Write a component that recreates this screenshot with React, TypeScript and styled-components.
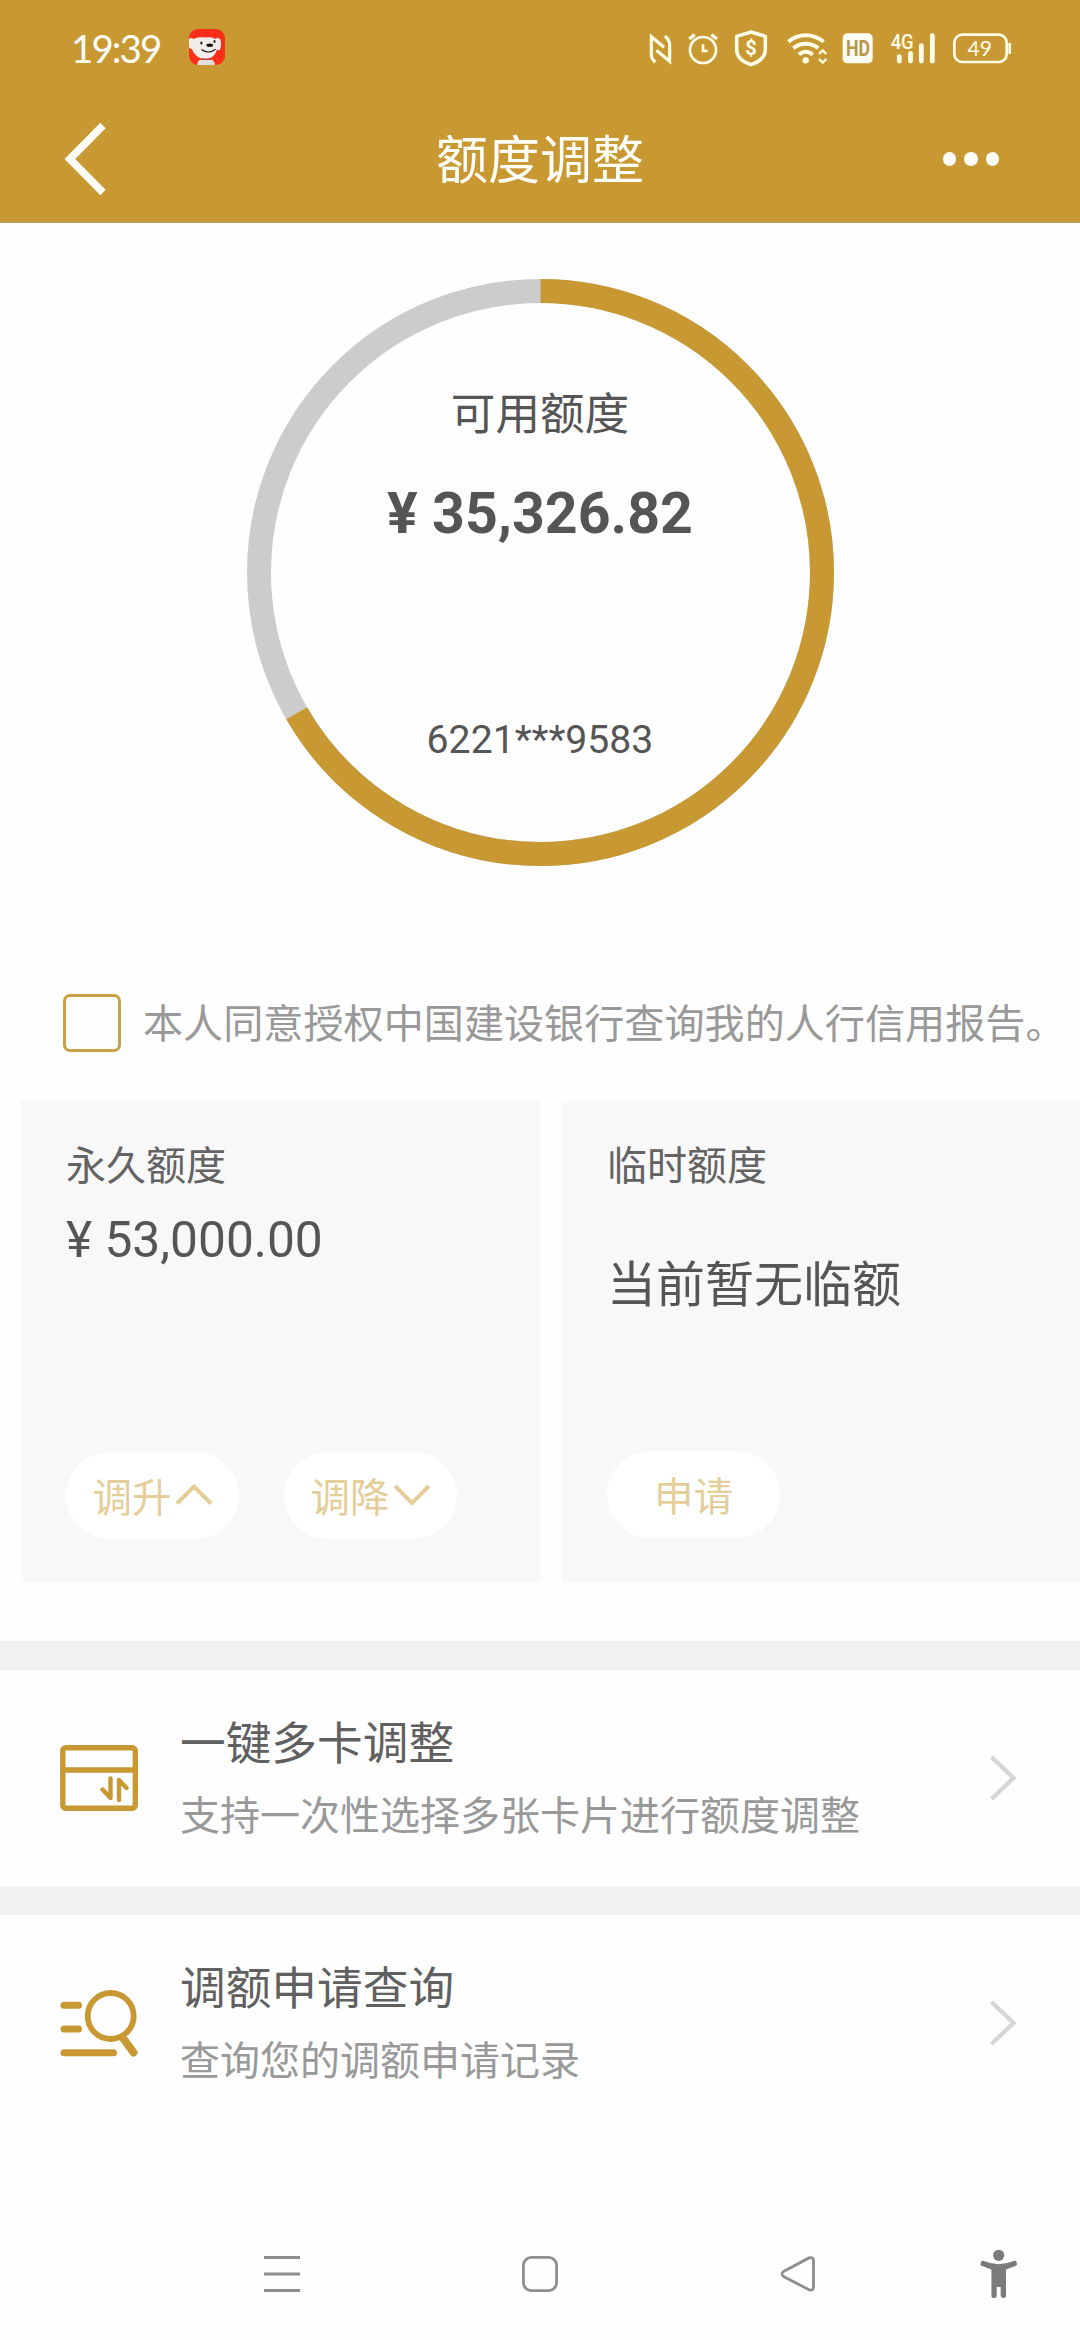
import React from "react";
import styled, { createGlobalStyle } from "styled-components";

const gold = "#c89932";
const sans = `Roboto, "Noto Sans CJK SC", sans-serif`;

const GlobalStyle = createGlobalStyle`
  * { box-sizing: border-box; }
  body { margin: 0; background: #fefefe; font-family: ${sans}; color: #555; }
  svg { display: block; flex: none; }
`;

const Screen = styled.div`
  width: 1080px;
  height: 2340px;
  display: flex;
  flex-direction: column;
  overflow: hidden;
  background: #fefefe;
`;

const Header = styled.header`
  height: 223px;
  background: ${gold};
  border-bottom: 2px solid #bf9a4c;
  color: #fffef8;
`;

const StatusBar = styled.div`
  height: 93px;
  display: flex;
  align-items: center;
  padding: 0 68px 0 71px;
`;

const Clock = styled.div`
  width: 118px;
  font: 400 38.5px/50px Lato, sans-serif;
  letter-spacing: -1.9px;
  padding-top: 3px;
`;

const StatusIcons = styled.div`
  margin-left: auto;
  display: flex;
`;

const StatusGlyph = styled.svg<{ $before: number }>`
  height: 40px;
  margin-left: ${(p) => p.$before}px;
  overflow: visible;
  fill: none;
  stroke: #fffde8;
`;

const TitleBar = styled.div`
  height: 128px;
  padding: 4px 81px 0 64px;
  display: grid;
  grid-template-columns: 1fr auto 1fr;
  align-items: center;
`;

const PageTitle = styled.h1`
  margin: 0;
  padding: 6px 0 0 17px;
  font-size: 52px;
  line-height: 64px;
  font-weight: 400;
`;

const BackIcon = styled.svg`
  width: 44px;
  height: 76px;
`;

const Dots = styled.div`
  justify-self: end;
  display: flex;
  gap: 8px;
`;

const Dot = styled.i`
  width: 13.5px;
  height: 13.5px;
  border-radius: 50%;
  background: #fffef8;
`;

const Gauge = styled.section`
  height: 771px;
  padding-top: 56px;
  display: grid;
  justify-content: center;
  align-content: start;
`;

const Ring = styled.svg`
  grid-area: 1 / 1;
  width: 587px;
  height: 587px;
`;

const GaugeText = styled.div`
  grid-area: 1 / 1;
  padding-top: 106px;
  display: flex;
  flex-direction: column;
  align-items: center;
`;

const GaugeLabel = styled.div`
  font-size: 44.6px;
  line-height: 60px;
`;

const GaugeAmount = styled.div`
  margin-top: 39px;
  font-size: 57.3px;
  line-height: 60px;
  font-weight: 700;
`;

const CardNumber = styled.div`
  margin-top: 171px;
  font-size: 39.2px;
  line-height: 50px;
`;

const Consent = styled.label`
  height: 58px;
  display: flex;
  align-items: center;
  padding-left: 62.5px;
  gap: 22.5px;
`;

const Checkbox = styled.span`
  width: 58px;
  height: 58px;
  flex: none;
  border: 3.5px solid #c9a045;
  border-radius: 7px;
`;

const ConsentText = styled.span`
  padding-top: 4px;
  font-size: 40.12px;
  line-height: 54px;
  color: #999;
  white-space: nowrap;
`;

const Limits = styled.section`
  margin-top: 49px;
  padding-left: 21px;
  display: grid;
  grid-template-columns: 519px 518px;
  gap: 22px;
  height: 481px;
`;

const LimitCard = styled.article`
  background: #f8f8f8;
  padding: 41px 45px 43.5px;
  display: flex;
  flex-direction: column;
`;

const LimitLabel = styled.div`
  font-size: 40px;
  line-height: 50px;
  color: #636363;
`;

const LimitValue = styled.div<{ $gap: number; $size: number }>`
  margin-top: ${(p) => p.$gap}px;
  font-size: ${(p) => p.$size}px;
  line-height: 60px;
  color: #555;
`;

const Actions = styled.div`
  margin-top: auto;
  display: flex;
  gap: 45px;
`;

const Pill = styled.button<{ $raised?: boolean }>`
  width: 173px;
  height: 86.5px;
  border: 0;
  padding: 8px 0 0;
  margin-bottom: ${(p) => (p.$raised ? 1 : 0)}px;
  border-radius: 44px;
  background: #fff;
  display: flex;
  align-items: center;
  justify-content: center;
  gap: 3px;
  font: 400 39.5px/50px ${sans};
  color: #e5cd98;
`;

const Chevron = styled.svg`
  width: 38px;
  height: 24px;
  margin-top: -8px;
`;

const Band = styled.div<{ $top?: number }>`
  height: 29px;
  margin-top: ${(p) => p.$top ?? 0}px;
  flex: none;
  background: #f1f1f1;
`;

const Row = styled.div`
  height: 216px;
  flex: none;
  display: flex;
  align-items: center;
  padding: 0 63px 0 60px;
`;

const RowText = styled.div`
  margin-left: 42px;
  flex: 1;
  padding-top: 6px;
  line-height: 72px;
`;

const RowTitle = styled.div`
  font-size: 45.7px;
  color: #606060;
`;

const RowHint = styled.div`
  font-size: 40px;
  color: #999;
`;

const NavBar = styled.nav`
  margin-top: auto;
  height: 132px;
  padding-left: 264px;
  display: flex;
  align-items: center;
`;

const NavIcon = styled.svg<{ $before?: number }>`
  margin-left: ${(p) => p.$before ?? 0}px;
  fill: none;
  stroke: #8e8e8e;
  stroke-width: 2.8;
`;

const AppBadge = () => (
  <svg width="36" height="36" viewBox="0 0 36 36">
    <defs>
      <clipPath id="badge"><rect width="36" height="36" rx="9" /></clipPath>
    </defs>
    <g clipPath="url(#badge)">
      <rect width="36" height="36" fill="#fb2f17" />
      <path d="M8 37c0-4 2-7 6-7h6c4 0 6 3 6 7z" fill="#e6dedb" />
      <path d="M0 10c1.500-1.500 3.500-1 4.500 0C8 8 13 8 17 8.500c4-.5 7 0 9.500 1.500 1-1.500 3.500-1.500 4.500 0 1.500 3 1.500 9-.5 11-1 .5-2 0-2.500-.5C26.500 26 22.500 30 17 30 10 30 5 26 3 20c-2 0-3-1-3-3z" fill="#f1ecea" />
      <path d="M12 30.300h10" stroke="#c63c35" strokeWidth="1.400" />
      <ellipse cx="20.700" cy="16.200" rx="3.400" ry="1.700" fill="#161212" />
      <ellipse cx="12.400" cy="14" rx="1.100" ry="1.500" fill="#161212" />
      <ellipse cx="25.500" cy="12.500" rx="1" ry="1.400" fill="#161212" />
      <path d="M12.500 20.500q7 5 14-.2" fill="none" stroke="#161212" strokeWidth="1.100" />
    </g>
  </svg>
);

const StatusRow = () => (
  <StatusIcons>
    <StatusGlyph $before={0} width="23" viewBox="57 50 69 120" strokeWidth="9.500">
      <path d="M76 156Q64 146 64 132V79L102 111M105 77Q119 90 119 103V153L79 120" />
    </StatusGlyph>
    <StatusGlyph $before={15} width="32" viewBox="171 50 96 120" strokeWidth="8">
      <circle cx="219" cy="119" r="39" />
      <path d="M178 86L194 73M244 73L261 86" strokeWidth="10" />
      <path d="M219 102V122H233" />
    </StatusGlyph>
    <StatusGlyph $before={15} width="34" viewBox="312 50 102 120" strokeWidth="10.500">
      <path d="M363 65L406 78V117C406 142 388 155 363 163C338 155 320 142 320 117V78Z" strokeLinejoin="round" />
      <text x="363" y="134" textAnchor="middle" fontFamily="Roboto" fontSize="60" fontWeight="700" fill="#fffde8" stroke="none">$</text>
    </StatusGlyph>
    <StatusGlyph $before={18} width="42" viewBox="468 50 126 120" strokeWidth="12">
      <path d="M475 94Q499 75 527 75T581 94M490 114Q506 100 527 100T565 113M507 133Q516 124 527 124T548 133" />
      <circle cx="527" cy="150" r="9.500" fill="#fffde8" stroke="none" />
      <path d="M567 131L578 120L589 131M567 146L578 157L589 146" strokeWidth="7" />
    </StatusGlyph>
    <StatusGlyph $before={14} width="31" viewBox="636 50 93 120">
      <rect x="638" y="69" width="90" height="90" rx="14" fill="#fffef4" stroke="none" />
      <text x="648" y="137" textLength="72" lengthAdjust="spacingAndGlyphs" fontFamily="Roboto" fontSize="64" fontWeight="700" fill="#b9964a" stroke="none">HD</text>
    </StatusGlyph>
    <StatusGlyph $before={17} width="46" viewBox="780 50 138 120">
      <text x="782" y="115" textLength="69" lengthAdjust="spacingAndGlyphs" fontFamily="Roboto" fontSize="63" fontWeight="500" fill="#fffde8" stroke="none">4G</text>
      <path d="M808 139V152M841.500 129V152M874 106V152M907 76V152" strokeWidth="14.500" strokeLinecap="round" />
    </StatusGlyph>
    <StatusGlyph $before={16} width="60" viewBox="966 50 180 120" strokeWidth="8">
      <rect x="973" y="73" width="157" height="82" rx="24" />
      <path d="M1139 98V131" strokeWidth="8" />
      <text x="1049" y="136" textAnchor="middle" fontFamily="Lato" fontSize="63" fill="#fffde8" stroke="none">49</text>
    </StatusGlyph>
  </StatusIcons>
);

const MultiCardIcon = () => (
  <svg width="78" height="66" viewBox="0 0 78 66" fill="none" stroke={gold} strokeWidth="5.400" strokeLinecap="round" strokeLinejoin="round">
    <rect x="2.800" y="2.800" width="72.500" height="60.500" rx="3" />
    <path d="M3 25H75" />
    <path d="M50.500 33.500V53L42.500 44.500M59 55V35L66.500 43" strokeWidth="4.400" />
  </svg>
);

const QueryIcon = () => (
  <svg width="78" height="68" viewBox="0 0 78 68" fill="none" stroke={gold} strokeLinecap="round">
    <circle cx="50.700" cy="27" r="23" strokeWidth="5.800" />
    <path d="M63 49L73.500 63.500" strokeWidth="8" />
    <path d="M4 16.300H18.500M4 40H18.500M4 63.700H53.500" strokeWidth="7" />
  </svg>
);

const RowArrow = () => (
  <svg width="28" height="48" viewBox="0 0 28 48" fill="none" stroke="#d6d6d6" strokeWidth="4.400">
    <path d="M2.500 3L24.500 24L2.500 45" />
  </svg>
);

export default function App() {
  return (
    <Screen>
      <GlobalStyle />
      <Header>
        <StatusBar>
          <Clock>19:39</Clock>
          <AppBadge />
          <StatusRow />
        </StatusBar>
        <TitleBar>
          <BackIcon viewBox="0 0 44 76" fill="none" stroke="#fffef8" strokeWidth="7.500">
            <path d="M39 4.500L5.800 38L39 71.500" />
          </BackIcon>
          <PageTitle>额度调整</PageTitle>
          <Dots><Dot /><Dot /><Dot /></Dots>
        </TitleBar>
      </Header>

      <Gauge>
        <Ring viewBox="0 0 587 587" fill="none" strokeWidth="24">
          <circle cx="293.500" cy="293.500" r="281.500" stroke="#ccc" />
          <circle cx="293.500" cy="293.500" r="281.500" stroke={gold} pathLength={360} strokeDasharray="240 120" transform="rotate(-90 293.500 293.500)" />
        </Ring>
        <GaugeText>
          <GaugeLabel>可用额度</GaugeLabel>
          <GaugeAmount>¥ 35,326.82</GaugeAmount>
          <CardNumber>6221***9583</CardNumber>
        </GaugeText>
      </Gauge>

      <Consent>
        <Checkbox />
        <ConsentText>本人同意授权中国建设银行查询我的人行信用报告。</ConsentText>
      </Consent>

      <Limits>
        <LimitCard>
          <LimitLabel>永久额度</LimitLabel>
          <LimitValue $gap={18} $size={49.7}>¥ 53,000.00</LimitValue>
          <Actions>
            <Pill>
              调升
              <Chevron viewBox="0 0 38 24" fill="none" stroke="#e5cd98" strokeWidth="4">
                <path d="M2 20.500L19 3.500L36 20.500" />
              </Chevron>
            </Pill>
            <Pill>
              调降
              <Chevron viewBox="0 0 38 24" fill="none" stroke="#e5cd98" strokeWidth="4">
                <path d="M2 3L19 20L36 3" />
              </Chevron>
            </Pill>
          </Actions>
        </LimitCard>
        <LimitCard>
          <LimitLabel>临时额度</LimitLabel>
          <LimitValue $gap={64} $size={49}>当前暂无临额</LimitValue>
          <Actions>
            <Pill $raised>申请</Pill>
          </Actions>
        </LimitCard>
      </Limits>

      <Band $top={59} />
      <Row>
        <MultiCardIcon />
        <RowText>
          <RowTitle>一键多卡调整</RowTitle>
          <RowHint>支持一次性选择多张卡片进行额度调整</RowHint>
        </RowText>
        <RowArrow />
      </Row>
      <Band />
      <Row>
        <QueryIcon />
        <RowText>
          <RowTitle>调额申请查询</RowTitle>
          <RowHint>查询您的调额申请记录</RowHint>
        </RowText>
        <RowArrow />
      </Row>

      <NavBar>
        <NavIcon width="36" height="36" viewBox="0 0 36 36">
          <path d="M0 1.500H36M0 18H36M0 34.500H36" />
        </NavIcon>
        <NavIcon $before={222} width="36" height="36" viewBox="0 0 36 36">
          <rect x="1.400" y="1.400" width="33.200" height="33.200" rx="8" />
        </NavIcon>
        <NavIcon $before={222} width="36" height="36" viewBox="0 0 36 36">
          <path d="M3.500 15.500L29 1.900Q33.500 .5 33.500 5V31Q33.500 35 29.500 34L3.500 20.500Q.5 18 3.500 15.500Z" />
        </NavIcon>
        <NavIcon $before={163} width="40" height="50" viewBox="0 0 40 50">
          <g fill="#7b7b7b" stroke="none">
            <circle cx="19.700" cy="6.300" r="5.600" />
            <path d="M4 11.800Q19.700 18.500 35.500 11.800Q37 11.500 37.500 13L38 15Q38 16 37 16.800L27 20.500V46.500Q27 49 24.500 49T21.700 46.500V38H17.700V46.500Q17.700 49 15 49T12.400 46.500V20.500L2.500 16.800Q1 16 1.500 15L2 13Q2.700 11.500 4 11.800Z" />
          </g>
        </NavIcon>
      </NavBar>
    </Screen>
  );
}
